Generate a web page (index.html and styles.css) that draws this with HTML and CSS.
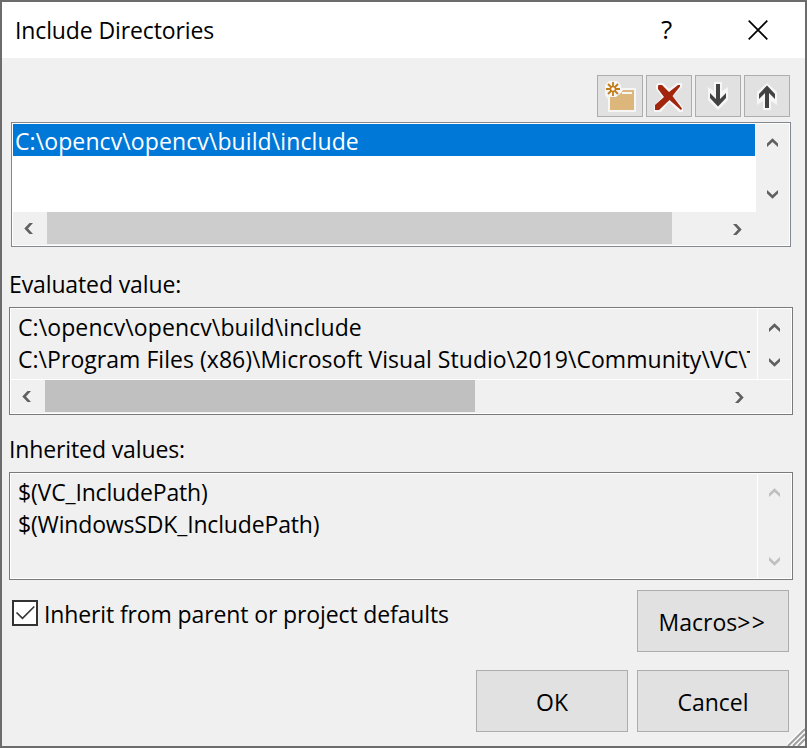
FILE: index.html
```html
<!DOCTYPE html>
<html lang="en">
<head>
<meta charset="utf-8">
<title>Include Directories</title>
<link rel="stylesheet" href="styles.css">
</head>
<body>
<svg width="0" height="0" class="defs">
  <symbol id="chev" viewBox="0 0 12 10"><path d="M1 9V5.500L6.500.300 12 5.500V9L6.500 4z" fill="currentColor"/></symbol>
</svg>
<div class="dialog">
  <header class="titlebar">
    <h1 class="t-title">Include Directories</h1>
    <span class="help">?</span>
    <svg class="close" width="20" height="20" viewBox="0 0 20 20"><path d="M.7.7 19.300 19.300M19.300.7.7 19.300" stroke="#000" stroke-width="1.700"/></svg>
  </header>
  <main class="content">
    <div class="toolbar">
      <button class="tool" aria-label="New line"><svg width="44" height="40" viewBox="0 0 44 40">
        <path d="M11 5h8l4 4v3h15v24H10V23l-3-4V9z" fill="#f6f6f6"/>
        <path d="M12 21h6l5-4 2-3h11v20H12z" fill="#dcb67a"/><path d="M24 17h10" stroke="#f6f6f6" stroke-width="2"/>
        <path d="M15 6v14M8 13h14M10 8l10 10M20 8 10 18" stroke="#c27d1a" stroke-width="1.800"/><circle cx="15" cy="13" r="2.500" fill="#fff" stroke="#c27d1a" stroke-width="1.500"/>
      </svg></button>
      <button class="tool" aria-label="Delete"><svg width="44" height="40" viewBox="0 0 44 40">
        <path d="M11 7h5l6 6 8-6h5v4l-9 9 10 11v5h-4L22 26l-8 10H7v-6l8-9-6-8V9z" fill="#f6f6f6"/>
        <path d="M11.500 9H15l7 7 9-7h2v1.500L25.500 20 35 32.500 34 34 22.500 24 12 34H8v-5l9-8-6-8v-2.500z" fill="#a1260d"/>
      </svg></button>
      <button class="tool" aria-label="Move down"><svg width="44" height="40" viewBox="0 0 44 40">
        <path d="M18 6h8v9l6-4v13L22 34 12 24V11l6 4z" fill="#f6f6f6"/>
        <path d="M20 8h4v15l6-6v5l-8 8.500-8-8.500v-5l6 6z" fill="#424242"/>
      </svg></button>
      <button class="tool" aria-label="Move up"><svg width="44" height="40" viewBox="0 0 44 40">
        <path d="M18 34h8v-9l6 4V16L22 7 12 16v13l6-4z" fill="#f6f6f6"/>
        <path d="M20 32h4V17l6 6v-5l-8-8.500-8 8.500v5l6-6z" fill="#424242"/>
      </svg></button>
    </div>

    <section class="box editor">
      <div class="pane"><div class="selected"><span class="t-sel">C:\opencv\opencv\build\include</span></div></div>
      <div class="vbar"><svg class="chev"><use href="#chev"/></svg><svg class="chev down"><use href="#chev"/></svg></div>
      <div class="hbar"><svg class="chev left"><use href="#chev"/></svg><div class="thumb"></div><svg class="chev right"><use href="#chev"/></svg></div>
    </section>

    <h2 class="label"><span class="t-ev">Evaluated value:</span></h2>
    <section class="box evaluated">
      <div class="pane lines"><div><span class="t-sel">C:\opencv\opencv\build\include</span></div><div><span class="t-path">C:\Program Files (x86)\Microsoft Visual Studio\2019\Community\VC\T</span></div></div>
      <div class="vbar"><svg class="chev"><use href="#chev"/></svg><svg class="chev down"><use href="#chev"/></svg></div>
      <div class="hbar"><svg class="chev left"><use href="#chev"/></svg><div class="thumb"></div><svg class="chev right"><use href="#chev"/></svg></div>
    </section>

    <h2 class="label"><span class="t-inh">Inherited values:</span></h2>
    <section class="box inherited">
      <div class="pane lines"><div><span class="t-vc">$(VC_IncludePath)</span></div><div><span class="t-sdk">$(WindowsSDK_IncludePath)</span></div></div>
      <div class="vbar"><svg class="chev"><use href="#chev"/></svg><svg class="chev down"><use href="#chev"/></svg></div>
    </section>

    <div class="options">
      <div class="check">
        <svg width="26" height="26" viewBox="0 0 26 26"><rect x="1" y="1" width="24" height="24" fill="#fff" stroke="#333" stroke-width="2"/><path d="m4.500 12.500 6 5.800L22.300 6.500" fill="none" stroke="#333" stroke-width="1.600"/></svg>
        <span class="t-check">Inherit from parent or project defaults</span>
      </div>
      <button class="btn"><span>Macros<span class="t-gt">&gt;&gt;</span></span></button>
    </div>
    <div class="actions">
      <button class="btn"><span class="t-ok">OK</span></button>
      <button class="btn"><span class="t-can">Cancel</span></button>
    </div>
  </main>
  <svg class="grip" width="18" height="18" viewBox="0 0 18 18"><path d="M-1 18 18-1M4 18 18 4M9 18l9-9M14 18l4-4" stroke="#fff" stroke-width="1.500"/><path d="M1 18 18 1M6 18 18 6M11 18l7-7" stroke="#a0a0a0" stroke-width="2"/></svg>
</div>
</body>
</html>
```
FILE: styles.css
```css
* { box-sizing: border-box; }
body { margin: 0; background: #6c6c6c; font: 23px/32px "Open Sans", "Noto Sans", sans-serif; color: #000; overflow: hidden; }
.defs { position: absolute; }
span, h1 { white-space: pre; }
h1, h2 { margin: 0; font-size: inherit; font-weight: 400; }
.dialog { position: relative; width: 807px; height: 748px; border: 2px solid #6c6c6c; background: #f0f0f0; }
.titlebar { height: 56px; background: #fff; display: flex; align-items: center; padding: 0 37px 0 13px; }
.titlebar h1 { flex: 1; }
.help { width: 13px; margin-right: 74px; font-size: 26px; padding-bottom: 2px; }
.close { margin-bottom: 1px; }
.content { padding: 17px 12px 0 7px; }
.toolbar { display: flex; justify-content: flex-end; gap: 3px; padding-right: 3px; height: 47px; }
button { font: inherit; color: inherit; padding: 0; background: #e1e1e1; border: 1px solid #adadad; }
.tool { width: 46px; height: 42px; }
.tool svg { display: block; }
.box { display: grid; width: 784px; height: 108px; border: 1px solid #7a7a7a; padding: 1px; background: #fff; grid-template: 70px 33px / 746px 33px; column-gap: 1px; row-gap: 1px; }
.pane, .vbar, .hbar { background: #f0f0f0; min-width: 0; }
.pane { overflow: hidden; }
.lines { padding: 2px 7px 0; }
.lines div { overflow: hidden; height: 32px; }
.vbar { display: flex; flex-direction: column; align-items: center; justify-content: space-between; padding: 14px 1px 12px 0; }
.hbar { grid-column: 1 / 3; display: flex; align-items: center; position: relative; padding: 0 46px 0 10px; }
.chev { width: 12px; height: 10px; color: #606060; flex: none; }
.down { transform: scaleY(-1); }
.left { transform: rotate(-90deg); }
.right { transform: rotate(90deg); margin-left: auto; }
.thumb { height: 32px; width: 430px; margin: 0 0 1px 12px; background: #c0c0c0; }
.editor { margin-left: 2px; width: 780px; height: 125px; border-color: #828790; grid-template: 88px 33px / 743px 33px; gap: 0; }
.editor .pane { background: #fff; }
.editor .vbar { padding-bottom: 13px; }
.editor .thumb { width: 625px; background: #cdcdcd; }
.selected { width: 742px; height: 32px; background: #0078d7; color: #fff; padding: 1px 0 0 2px; }
.label { padding: 21px 0 7px; height: 60px; }
.evaluated + .label { height: 57px; padding-top: 18px; }
.inherited { grid-template-rows: 104px; }
.inherited .chev { color: #bfbfbf; }
.options { display: flex; justify-content: space-between; padding: 10px 4px 0 3px; }
.check { display: flex; gap: 6px; height: 32px; margin-top: 10px; }
.check span { margin-top: -2px; }
.btn { width: 152px; height: 62px; padding: 1px 0 0; }
.options .btn { padding-right: 1px; }
.actions { display: flex; justify-content: flex-end; gap: 9px; padding: 18px 4px 0 0; }
.grip { position: absolute; right: 0; bottom: 0; }

/* Tracking per text run */
.t-title, .t-ev, .t-inh { letter-spacing: -.12px; }
.t-sel { letter-spacing: .1px; }
.t-path { letter-spacing: .04px; }
.t-vc, .t-sdk { letter-spacing: -.16px; }
.t-check { letter-spacing: -.12px; }
.t-gt { letter-spacing: 1.500px; }
```
